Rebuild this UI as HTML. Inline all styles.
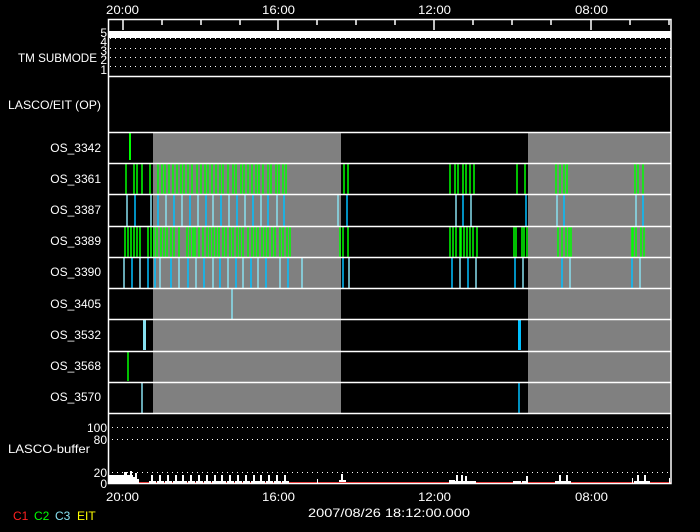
<!DOCTYPE html>
<html><head><meta charset="utf-8"><style>
html,body{margin:0;padding:0;background:#000;width:700px;height:532px;overflow:hidden}
svg{display:block}
text{font-family:"Liberation Sans",sans-serif;font-size:12px;fill:#fff}
</style></head><body>
<svg width="700" height="532" viewBox="0 0 700 532" xmlns="http://www.w3.org/2000/svg">
<rect width="700" height="532" fill="#000"/>
<rect x="153" y="132" width="188" height="281" fill="#808080"/>
<rect x="528" y="132" width="143" height="281" fill="#808080"/>
<rect x="108" y="31" width="563" height="7" fill="#fff"/>
<g stroke="#fff" stroke-width="1" stroke-dasharray="1 4">
<line x1="110" y1="38.5" x2="671" y2="38.5"/>
<line x1="110" y1="48.5" x2="671" y2="48.5"/>
<line x1="110" y1="57.5" x2="671" y2="57.5"/>
<line x1="110" y1="66.5" x2="671" y2="66.5"/>
<line x1="112" y1="427.5" x2="671" y2="427.5"/>
<line x1="112" y1="439.5" x2="671" y2="439.5"/>
<line x1="112" y1="472.5" x2="671" y2="472.5"/>
</g>
<g stroke="#00ff00" stroke-width="1.5">
<line x1="130" y1="132" x2="130" y2="160" stroke-width="2"/>
<line x1="128" y1="351" x2="128" y2="381"/>
<path d="M126 163V194M134 163V194M137 163V194M142 163V194M150 163V194M158 163V194M162 163V194M165 163V194M169 163V194M173 163V194M177 163V194M181 163V194M184 163V194M188 163V194M192 163V194M197 163V194M201 163V194M205 163V194M208 163V194M212 163V194M216 163V194M220 163V194M223 163V194M228 163V194M233 163V194M236 163V194M241 163V194M244 163V194M248 163V194M252 163V194M256 163V194M259 163V194M263 163V194M268 163V194M271 163V194M276 163V194M279 163V194M283 163V194M286 163V194M344 163V194M348 163V194M450 163V194M455 163V194M458 163V194M463 163V194M466 163V194M470 163V194M474 163V194M517 163V194M525 163V194M556 163V194M560 163V194M564 163V194M567 163V194M635 163V194M638 163V194M643 163V194"/>
<path d="M125 226V257M128 226V257M131 226V257M134 226V257M137 226V257M140 226V257M148 226V257M151 226V257M154 226V257M157 226V257M161 226V257M164 226V257M167 226V257M171 226V257M174 226V257M179 226V257M187 226V257M190 226V257M193 226V257M195 226V257M199 226V257M203 226V257M207 226V257M210 226V257M213 226V257M216 226V257M219 226V257M223 226V257M226 226V257M230 226V257M233 226V257M237 226V257M240 226V257M243 226V257M248 226V257M252 226V257M255 226V257M258 226V257M262 226V257M265 226V257M268 226V257M272 226V257M275 226V257M280 226V257M283 226V257M287 226V257M290 226V257M340 226V257M343 226V257M348 226V257M450 226V257M453 226V257M456 226V257M460 226V257M461 226V257M464 226V257M467 226V257M470 226V257M473 226V257M477 226V257M514 226V257M516 226V257M522 226V257M524 226V257M527 226V257M558 226V257M562 226V257M566 226V257M569 226V257M571 226V257M632 226V257M633 226V257M636 226V257M641 226V257M644 226V257"/>
</g>
<g stroke-width="1.5">
<path stroke="#87e0f0" d="M127 194V226M151 194V226M166 194V226M182 194V226M198 194V226M213 194V226M229 194V226M245 194V226M261 194V226M277 194V226M338 194V226M456 194V226M471 194V226M557 194V226M636 194V226M124 257V288M140 257V288M160 257V288M179 257V288M196 257V288M213 257V288M228 257V288M243 257V288M258 257V288M280 257V288M302 257V288M349 257V288M460 257V288M476 257V288M523 257V288M570 257V288M640 257V288"/>
<path stroke="#00c0ff" d="M135 194V226M158 194V226M174 194V226M190 194V226M206 194V226M221 194V226M237 194V226M253 194V226M268 194V226M284 194V226M347 194V226M463 194V226M526 194V226M564 194V226M643 194V226M132 257V288M148 257V288M155 257V288M171 257V288M188 257V288M204 257V288M220 257V288M236 257V288M251 257V288M266 257V288M288 257V288M343 257V288M452 257V288M468 257V288M515 257V288M562 257V288M632 257V288"/>
<path stroke="#87e0f0" d="M232 288V319M142 382V413"/>
<path stroke="#00c0ff" d="M519 382V413"/>
<rect x="143" y="320" width="3" height="30" fill="#87e0f0" stroke="none"/>
<rect x="518" y="320" width="3" height="30" fill="#00c0ff" stroke="none"/>
</g>
<line x1="130" y1="482.5" x2="671" y2="482.5" stroke="#e00000" stroke-width="1"/>
<g fill="#fff">
<rect x="109" y="475" width="24" height="8"/>
<rect x="124" y="472" width="3" height="11"/><rect x="130" y="471" width="2" height="12"/>
<rect x="133" y="477" width="3" height="6"/><rect x="135" y="473" width="2" height="10"/>
<rect x="137" y="479" width="2" height="4"/>
<path d="M151 475h2v6h3v2h-7v-2h2zM159 475h2v6h3v2h-7v-2h2zM167 475h2v6h3v2h-7v-2h2zM175 475h2v6h3v2h-7v-2h2zM182 475h2v6h3v2h-7v-2h2zM190 475h2v6h3v2h-7v-2h2zM198 475h2v6h3v2h-7v-2h2zM206 475h2v6h3v2h-7v-2h2zM214 475h2v6h3v2h-7v-2h2zM221 475h2v6h3v2h-7v-2h2zM229 475h2v6h3v2h-7v-2h2zM237 475h2v6h3v2h-7v-2h2zM245 475h2v6h3v2h-7v-2h2zM253 475h2v6h3v2h-7v-2h2zM260 475h2v6h3v2h-7v-2h2zM268 475h2v6h3v2h-7v-2h2zM276 475h2v6h3v2h-7v-2h2zM284 475h2v6h3v2h-7v-2h2zM317 479h1v4h-1zM341 474h2v6h3v2h-7v-2h2z"/>
<path d="M449 480h6v3h-6zM456 475h2v8h-2zM461 475h2v8h-2zM465 476h2v7h-2zM454 481h22v2h-22zM513 481h8v2h-8zM526 476h2v7h-2zM522 481h6v2h-6zM559 475h2v8h-2zM566 475h2v8h-2zM555 481h16v2h-16zM632 478h1v5h-1zM637 475h2v8h-2zM644 475h2v8h-2zM634 481h16v2h-16zM669 478h1v5h-1z"/>
</g>
<g stroke="#fff" stroke-width="1.5" fill="none">
<rect x="108.5" y="19.5" width="562.5" height="464"/>
<path d="M108 76.5H671M108 132.5H671M108 163.5H671M108 194.5H671M108 226.5H671M108 257.5H671M108 288.5H671M108 319.5H671M108 351.5H671M108 382.5H671M108 413.5H671"/>
<path d="M123 20V30M278 20V30M434 20V30M591 20V30M162 20V25M201 20V25M240 20V25M317 20V25M356 20V25M395 20V25M473 20V25M512 20V25M551 20V25M630 20V25M669 20V25"/>
</g>
<text x="106" y="14" textLength="33" lengthAdjust="spacingAndGlyphs">20:00</text>
<text x="262" y="14" textLength="33" lengthAdjust="spacingAndGlyphs">16:00</text>
<text x="418" y="14" textLength="33" lengthAdjust="spacingAndGlyphs">12:00</text>
<text x="575" y="14" textLength="33" lengthAdjust="spacingAndGlyphs">08:00</text>
<text x="106" y="501" textLength="33" lengthAdjust="spacingAndGlyphs">20:00</text>
<text x="262" y="501" textLength="33" lengthAdjust="spacingAndGlyphs">16:00</text>
<text x="418" y="501" textLength="33" lengthAdjust="spacingAndGlyphs">12:00</text>
<text x="575" y="501" textLength="33" lengthAdjust="spacingAndGlyphs">08:00</text>
<text x="308" y="517" textLength="162" lengthAdjust="spacingAndGlyphs">2007/08/26 18:12:00.000</text>
<text x="18" y="62" textLength="79" lengthAdjust="spacingAndGlyphs">TM SUBMODE</text>
<text x="8" y="109" textLength="93" lengthAdjust="spacingAndGlyphs">LASCO/EIT (OP)</text>
<text x="8" y="453" textLength="82" lengthAdjust="spacingAndGlyphs">LASCO-buffer</text>
<g text-anchor="end">
<text x="101" y="152">OS_3342</text>
<text x="101" y="183">OS_3361</text>
<text x="101" y="214">OS_3387</text>
<text x="101" y="245">OS_3389</text>
<text x="101" y="276">OS_3390</text>
<text x="101" y="308">OS_3405</text>
<text x="101" y="339">OS_3532</text>
<text x="101" y="370">OS_3568</text>
<text x="101" y="401">OS_3570</text>
<text x="107" y="432">100</text>
<text x="107" y="444">80</text>
<text x="107" y="477">20</text>
<text x="107" y="488">0</text>
<text x="107" y="37" font-size="10">5</text>
<text x="107" y="46" font-size="10">4</text>
<text x="107" y="55" font-size="10">3</text>
<text x="107" y="64" font-size="10">2</text>
<text x="107" y="74" font-size="10">1</text>
</g>
<g font-size="10">
<text x="13" y="520" style="fill:#ff2020">C1</text>
<text x="34" y="520" style="fill:#00ff00">C2</text>
<text x="55" y="520" style="fill:#87e0f0">C3</text>
<text x="77" y="520" style="fill:#ffff00">EIT</text>
</g>
</svg>
</body></html>
